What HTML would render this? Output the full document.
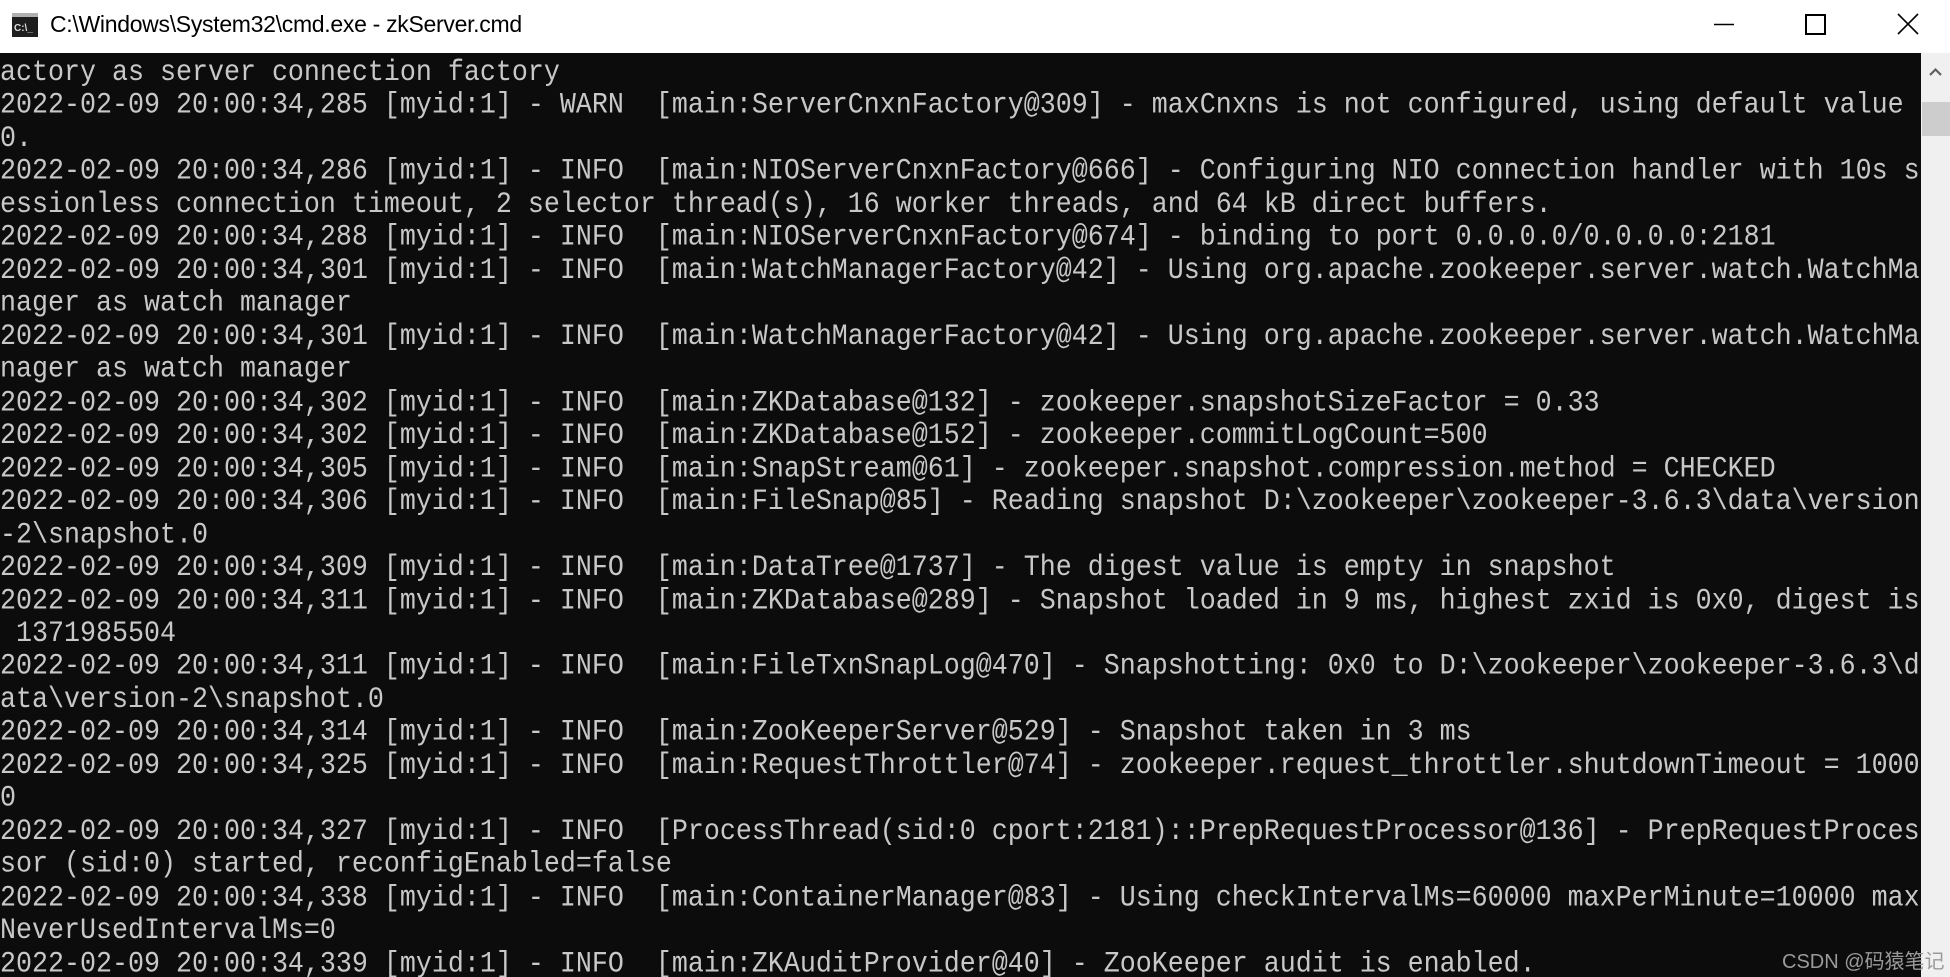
<!DOCTYPE html>
<html><head><meta charset="utf-8"><style>
html,body{margin:0;padding:0;width:1950px;height:977px;overflow:hidden;background:#fff}
#title{position:absolute;left:0;top:0;width:1950px;height:53px;background:#fff}
#title .t{position:absolute;left:50px;top:11px;font:23px "Liberation Sans",sans-serif;color:#000;letter-spacing:-0.3px}
#con{position:absolute;left:0;top:53px;width:1921px;height:924px;background:#0c0c0c;overflow:hidden}
#sb{position:absolute;left:1921px;top:53px;width:29px;height:924px;background:#f0f0f0}
pre{margin:0;padding:4px 0 0 0;font-family:"Liberation Mono",monospace;font-size:26.67px;line-height:29.464px;color:#c8c8c8;white-space:pre;transform:scaleY(1.12);transform-origin:0 0}
.wm{position:absolute;left:1782px;top:945px;font:20px "Liberation Sans","Noto Sans CJK SC",sans-serif;color:#9a9a9a}
</style></head><body>
<div id="title">
<svg style="position:absolute;left:12px;top:13px" width="26" height="24" viewBox="0 0 26 24"><rect x="0" y="0" width="26" height="24" fill="#1e1e1e"/><rect x="0" y="0" width="26" height="4" fill="#b0b0b0"/><text x="2" y="18" font-family="Liberation Sans" font-size="10" font-weight="bold" fill="#ddd">C:\_</text></svg>
<div class="t">C:\Windows\System32\cmd.exe - zkServer.cmd</div>
<svg style="position:absolute;left:1700px;top:0" width="250" height="53"><line x1="14" y1="24.5" x2="34" y2="24.5" stroke="#000" stroke-width="1.5"/><rect x="106" y="15" width="19" height="19" fill="none" stroke="#000" stroke-width="2"/><path d="M198 14 L218 34 M218 14 L198 34" stroke="#000" stroke-width="1.6"/></svg>
</div>
<div id="con"><pre>actory as server connection factory
2022-02-09 20:00:34,285 [myid:1] - WARN  [main:ServerCnxnFactory@309] - maxCnxns is not configured, using default value
0.
2022-02-09 20:00:34,286 [myid:1] - INFO  [main:NIOServerCnxnFactory@666] - Configuring NIO connection handler with 10s s
essionless connection timeout, 2 selector thread(s), 16 worker threads, and 64 kB direct buffers.
2022-02-09 20:00:34,288 [myid:1] - INFO  [main:NIOServerCnxnFactory@674] - binding to port 0.0.0.0/0.0.0.0:2181
2022-02-09 20:00:34,301 [myid:1] - INFO  [main:WatchManagerFactory@42] - Using org.apache.zookeeper.server.watch.WatchMa
nager as watch manager
2022-02-09 20:00:34,301 [myid:1] - INFO  [main:WatchManagerFactory@42] - Using org.apache.zookeeper.server.watch.WatchMa
nager as watch manager
2022-02-09 20:00:34,302 [myid:1] - INFO  [main:ZKDatabase@132] - zookeeper.snapshotSizeFactor = 0.33
2022-02-09 20:00:34,302 [myid:1] - INFO  [main:ZKDatabase@152] - zookeeper.commitLogCount=500
2022-02-09 20:00:34,305 [myid:1] - INFO  [main:SnapStream@61] - zookeeper.snapshot.compression.method = CHECKED
2022-02-09 20:00:34,306 [myid:1] - INFO  [main:FileSnap@85] - Reading snapshot D:\zookeeper\zookeeper-3.6.3\data\version
-2\snapshot.0
2022-02-09 20:00:34,309 [myid:1] - INFO  [main:DataTree@1737] - The digest value is empty in snapshot
2022-02-09 20:00:34,311 [myid:1] - INFO  [main:ZKDatabase@289] - Snapshot loaded in 9 ms, highest zxid is 0x0, digest is
 1371985504
2022-02-09 20:00:34,311 [myid:1] - INFO  [main:FileTxnSnapLog@470] - Snapshotting: 0x0 to D:\zookeeper\zookeeper-3.6.3\d
ata\version-2\snapshot.0
2022-02-09 20:00:34,314 [myid:1] - INFO  [main:ZooKeeperServer@529] - Snapshot taken in 3 ms
2022-02-09 20:00:34,325 [myid:1] - INFO  [main:RequestThrottler@74] - zookeeper.request_throttler.shutdownTimeout = 1000
0
2022-02-09 20:00:34,327 [myid:1] - INFO  [ProcessThread(sid:0 cport:2181)::PrepRequestProcessor@136] - PrepRequestProces
sor (sid:0) started, reconfigEnabled=false
2022-02-09 20:00:34,338 [myid:1] - INFO  [main:ContainerManager@83] - Using checkIntervalMs=60000 maxPerMinute=10000 max
NeverUsedIntervalMs=0
2022-02-09 20:00:34,339 [myid:1] - INFO  [main:ZKAuditProvider@40] - ZooKeeper audit is enabled.</pre></div>
<div id="sb">
<svg style="position:absolute;left:0;top:0" width="29" height="40"><path d="M9 22 L14.5 16.5 L20 22" fill="none" stroke="#606060" stroke-width="2.2"/></svg>
<div style="position:absolute;left:1px;top:49px;width:28px;height:34px;background:#cdcdcd"></div>
</div>
<div class="wm">CSDN @码猿笔记</div>
</body></html>
